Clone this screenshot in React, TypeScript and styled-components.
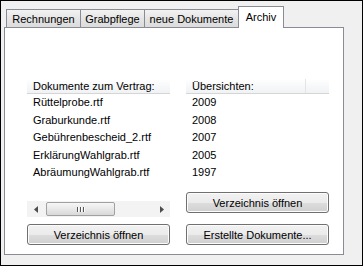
import React from 'react';
import styled, { createGlobalStyle } from 'styled-components';

const GlobalStyle = createGlobalStyle`
  html, body {
    margin: 0;
    padding: 0;
    background: #f0f0f0;
  }
  * {
    box-sizing: border-box;
  }
`;

const Window = styled.div`
  width: 363px;
  height: 266px;
  border: 1px solid #000;
  background: #f0f0f0;
  padding: 5px 18px 10px 3px;
  display: flex;
  flex-direction: column;
  font-family: "Liberation Sans", Arial, sans-serif;
  font-size: 11px;
  color: #000;
`;

const TabStrip = styled.div`
  display: flex;
  align-items: flex-end;
  height: 21px;
  padding-left: 2px;
`;

const Tab = styled.div<{ $width: number; $active?: boolean }>`
  position: relative;
  width: ${p => p.$width}px;
  height: ${p => (p.$active ? 22 : 18)}px;
  margin-left: -1px;
  margin-bottom: ${p => (p.$active ? -1 : 0)}px;
  z-index: ${p => (p.$active ? 2 : 1)};
  border: 1px solid #898c95;
  border-bottom: none;
  background: ${p =>
    p.$active ? '#fff' : 'linear-gradient(#f2f2f2, #e5e5e5 50%, #dcdcdc)'};
  display: flex;
  justify-content: center;
  align-items: ${p => (p.$active ? 'flex-start' : 'center')};
  padding-top: ${p => (p.$active ? 4 : 1)}px;
  white-space: nowrap;

  &:first-child {
    margin-left: 0;
  }
`;

const Panel = styled.div`
  flex: 1;
  border: 1px solid #898c95;
  background: #fff;
  padding: 51px 14px 9px 22px;
  display: grid;
  grid-template-columns: 143px 143px;
  column-gap: 16px;
`;

const Column = styled.div`
  display: flex;
  flex-direction: column;
`;

const ListView = styled.div`
  flex: 1;
  display: flex;
  flex-direction: column;
`;

const HeaderRow = styled.div`
  display: flex;
  height: 15px;
  background: linear-gradient(#ffffff, #f7f8f9 50%, #f1f2f4);
  border-bottom: 1px solid #d5d5d5;
`;

const HeaderCell = styled.div<{ $width?: number }>`
  ${p => (p.$width ? `width: ${p.$width}px;` : 'flex: 1;')}
  padding-left: 6px;
  line-height: 14px;
  white-space: nowrap;
  overflow: hidden;
  border-right: ${p => (p.$width ? '1px solid #e3e4e6' : 'none')};
`;

const Item = styled.div`
  height: 17.5px;
  line-height: 17.5px;
  padding-left: 6px;
  white-space: nowrap;
`;

const ScrollBar = styled.div`
  display: flex;
  align-items: center;
  height: 16px;
  background: #f3f3f3;
`;

const ArrowButton = styled.div`
  width: 17px;
  height: 16px;
  display: flex;
  align-items: center;
  justify-content: center;
`;

const Thumb = styled.div`
  width: 69px;
  height: 14px;
  margin-left: 2px;
  border: 1px solid #a1a1a1;
  border-radius: 2px;
  background: linear-gradient(#f6f6f6, #e8e8e8 50%, #d9d9d9);
  display: flex;
  align-items: center;
  justify-content: center;
  gap: 1px;
`;

const Grip = styled.span`
  width: 1px;
  height: 5px;
  background: #555;
  box-shadow: 1px 0 0 #fff;
  margin-right: 1px;
`;

const Track = styled.div`
  flex: 1;
`;

const Button = styled.button<{ $gap?: number }>`
  height: 21px;
  margin-top: ${p => p.$gap ?? 0}px;
  border: 1px solid #707070;
  border-radius: 3px;
  background: linear-gradient(#f2f2f2, #ebebeb 50%, #dddddd 51%, #cfcfcf);
  font-family: "Liberation Sans", Arial, sans-serif;
  font-size: 11px;
  color: #000;
  padding: 0;
  box-shadow: inset 0 0 0 1px #fcfcfc;
`;

const ArrowIcon: React.FC<{ dir: 'left' | 'right' }> = ({ dir }) => (
  <svg width="4" height="7" viewBox="0 0 4 7">
    {dir === 'left' ? (
      <path d="M4 0 L0 3.5 L4 7 Z" fill="#4d4d4d" />
    ) : (
      <path d="M0 0 L4 3.5 L0 7 Z" fill="#4d4d4d" />
    )}
  </svg>
);

const documents = [
  'Rüttelprobe.rtf',
  'Graburkunde.rtf',
  'Gebührenbescheid_2.rtf',
  'ErklärungWahlgrab.rtf',
  'AbräumungWahlgrab.rtf',
];

const years = ['2009', '2008', '2007', '2005', '1997'];

const tabs = [
  { label: 'Rechnungen', width: 75 },
  { label: 'Grabpflege', width: 65 },
  { label: 'neue Dokumente', width: 95 },
  { label: 'Archiv', width: 46, active: true },
];

const App: React.FC = () => {
  return (
    <>
      <GlobalStyle />
      <Window>
        <TabStrip>
          {tabs.map(t => (
            <Tab key={t.label} $width={t.width} $active={t.active}>
              {t.label}
            </Tab>
          ))}
        </TabStrip>
        <Panel>
          <Column>
            <ListView>
              <HeaderRow>
                <HeaderCell>Dokumente zum Vertrag:</HeaderCell>
              </HeaderRow>
              {documents.map(d => (
                <Item key={d}>{d}</Item>
              ))}
            </ListView>
            <ScrollBar>
              <ArrowButton>
                <ArrowIcon dir="left" />
              </ArrowButton>
              <Thumb>
                <Grip />
                <Grip />
                <Grip />
              </Thumb>
              <Track />
              <ArrowButton>
                <ArrowIcon dir="right" />
              </ArrowButton>
            </ScrollBar>
            <Button $gap={7}>Verzeichnis öffnen</Button>
          </Column>
          <Column>
            <ListView>
              <HeaderRow>
                <HeaderCell $width={120}>Übersichten:</HeaderCell>
                <HeaderCell />
              </HeaderRow>
              {years.map(y => (
                <Item key={y}>{y}</Item>
              ))}
            </ListView>
            <Button>Verzeichnis öffnen</Button>
            <Button $gap={11}>Erstellte Dokumente...</Button>
          </Column>
        </Panel>
      </Window>
    </>
  );
};

export default App;
